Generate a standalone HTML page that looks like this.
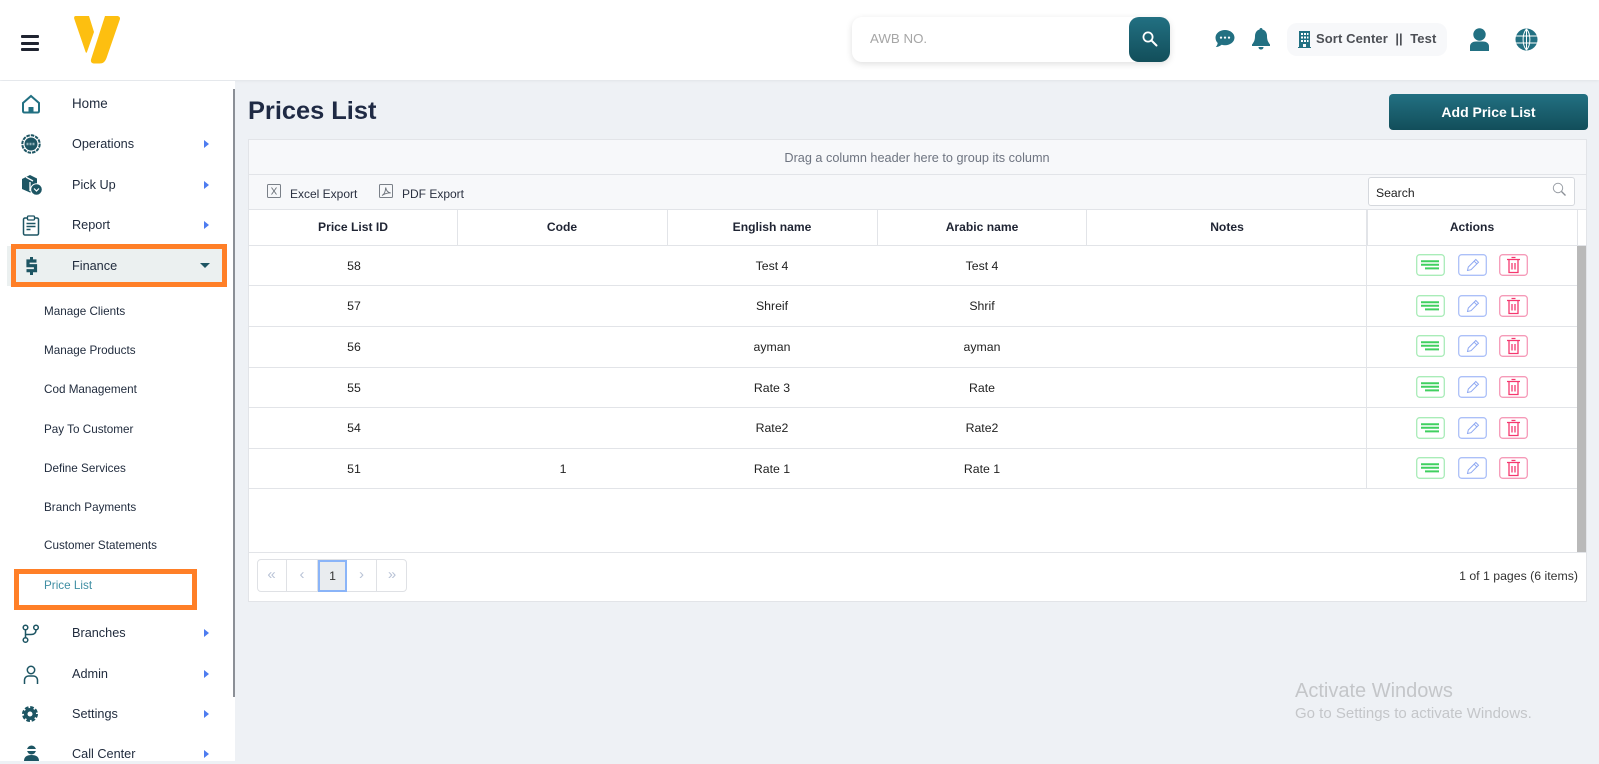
<!DOCTYPE html>
<html><head><meta charset="utf-8"><title>Prices List</title>
<style>
html,body{margin:0;padding:0;width:1599px;height:761px;overflow:hidden;background:#eef1f5;font-family:"Liberation Sans",sans-serif;color:#1f2a3c}
*{box-sizing:border-box}
.a,.t,.c{position:absolute}
.t,.c{height:20px;line-height:20px;white-space:nowrap}
.c{transform:translateX(-50%)}
.m{font-size:12.700px;left:72px;color:#1f2a3c}
.s{font-size:11.700px;left:44px;color:#1f2a3c}
.ar{position:absolute;left:204px;width:0;height:0;border-left:5px solid #4d7cf0;border-top:4.500px solid transparent;border-bottom:4.500px solid transparent}
.td{font-size:12.300px;color:#222}
.th{font-size:12.100px;font-weight:bold;color:#1f2433}
.hl{position:absolute;left:249px;width:1328px;height:1px;background:#e2e4e8}
.vl{position:absolute;width:1px;background:#e2e4e8}
.pc{position:absolute;top:559px;height:33px;border-right:1px solid #dfe1e5;text-align:center;line-height:31px;color:#b9c3d6;font-size:15px}
</style></head><body>
<svg width="0" height="0" style="position:absolute">
<symbol id="ag" viewBox="0 0 29 22"><rect x=".7" y=".7" width="27.600" height="20.600" rx="3" fill="#fff" stroke="#a9ecb8" stroke-width="1.300"/><path d="M5 7.200h18M5 10.800h18M9 14.400h14" stroke="#40d060" stroke-width="2"/></symbol>
<symbol id="ab" viewBox="0 0 29 22"><rect x=".7" y=".7" width="27.600" height="20.600" rx="3" fill="#fff" stroke="#acc0f8" stroke-width="1.300"/><path d="M9.500 16.500l.8-3.500 7.500-7.500 2.700 2.700-7.500 7.500zM16.200 7.200l2.700 2.700" fill="none" stroke="#8ea8f2" stroke-width="1"/></symbol>
<symbol id="ar" viewBox="0 0 29 22"><rect x=".7" y=".7" width="27.600" height="20.600" rx="3" fill="#fff" stroke="#f59ab8" stroke-width="1.300"/><path d="M8 5.500h13M12.500 3.500h4M10 5.500v13h9v-13M13 9v6.500M16 9v6.500" fill="none" stroke="#f5386f" stroke-width="1.300"/></symbol>
</svg>

<!-- header -->
<div class="a" style="left:0;top:0;width:1599px;height:80px;background:#fff;box-shadow:0 1px 3px rgba(0,0,0,.06)"></div>
<div class="a" style="left:21px;top:35px;width:18px;height:3px;background:#1f2430;border-radius:1px"></div>
<div class="a" style="left:21px;top:42px;width:18px;height:3px;background:#1f2430;border-radius:1px"></div>
<div class="a" style="left:21px;top:48px;width:18px;height:3px;background:#1f2430;border-radius:1px"></div>
<svg class="a" style="left:70px;top:12px" width="54" height="56" viewBox="70 12 54 56"><path d="M75.500 16H89l5 16-7 20c-.4 1-1 1-1.400 0L74.300 19c-.5-1.500 0-3 1.200-3z" fill="#fdbf10"/><path d="M105 16h12c2 0 3.200 1.200 3 3L106.500 58c-1.500 4-3.500 5.500-7 5.500H94c-2.500 0-3.500-2-3-4z" fill="#fdbf10"/></svg>

<div class="a" style="left:852px;top:17px;width:318px;height:45px;background:#fff;border-radius:10px;box-shadow:0 2px 7px rgba(0,0,0,.13)"></div>
<div class="t" style="left:870px;top:29px;font-size:13.300px;color:#a6a6a6">AWB NO.</div>
<div class="a" style="left:1129px;top:17px;width:41px;height:45px;border-radius:10px;background:linear-gradient(#227082,#124e5a)"></div>
<svg class="a" style="left:1141px;top:30px" width="18" height="18" viewBox="0 0 18 18"><circle cx="7" cy="7" r="4.600" fill="none" stroke="#fff" stroke-width="1.800"/><path d="M10.500 10.500l5 5" stroke="#fff" stroke-width="2" stroke-linecap="round"/></svg>

<svg class="a" style="left:1215px;top:29px" width="20" height="20" viewBox="0 0 20 20"><path d="M10 1c5.300 0 9.500 3.400 9.500 7.600s-4.200 7.600-9.500 7.600c-1.200 0-2.300-.2-3.300-.5C5 17 3 18 .8 18c1-1 1.700-2.500 1.900-4C1.300 12.600.5 10.700.5 8.600.5 4.400 4.700 1 10 1z" fill="#227082"/><circle cx="6" cy="8.600" r="1.100" fill="#fff"/><circle cx="10" cy="8.600" r="1.100" fill="#fff"/><circle cx="14" cy="8.600" r="1.100" fill="#fff"/></svg>
<svg class="a" style="left:1251px;top:28px" width="20" height="22" viewBox="0 0 20 22"><path d="M10 0c1 0 1.500.7 1.500 1.500C14.500 2.300 16 5 16 8c0 4 1 6 3 8.500V18H1v-1.500C3 14 4 12 4 8c0-3 1.500-5.700 4.500-6.500C8.500.7 9 0 10 0zM7.500 19h5c0 1.500-1 2.500-2.500 2.500S7.500 20.500 7.500 19z" fill="#227082"/></svg>

<div class="a" style="left:1287px;top:23px;width:160px;height:33px;background:#f7f8fa;border-radius:10px"></div>
<svg class="a" style="left:1298px;top:31px" width="13" height="17" viewBox="0 0 13 17"><path d="M1 0h11v16H8v-3H5v3H1z" fill="#227082"/><path d="M0 16h13v1H0z" fill="#227082"/><path d="M3 2h2v2H3zM6 2h2v2H6zM9 2h1.500v2H9zM3 5.500h2v2H3zM6 5.500h2v2H6zM9 5.500h1.500v2H9zM3 9h2v2H3zM6 9h2v2H6zM9 9h1.500v2H9z" fill="#fff"/></svg>
<div class="t" style="left:1316px;top:29px;font-size:13px;font-weight:bold;color:#4c4f55;letter-spacing:.1px">Sort Center&nbsp; ||&nbsp; Test</div>

<svg class="a" style="left:1469px;top:28px" width="21" height="23" viewBox="0 0 21 23"><circle cx="10.500" cy="6.500" r="6.200" fill="#227082"/><path d="M1 23v-4.500C1 15 4 13.500 7 13.500h7c3 0 6 1.500 6 5V23z" fill="#227082"/></svg>
<svg class="a" style="left:1515px;top:28px" width="23" height="23" viewBox="0 0 23 23"><circle cx="11.500" cy="11.500" r="11" fill="#227082"/><path d="M1 8h21M1 15h21M11.500 1v21M11.500 1C7 6 7 17 11.500 22M11.500 1c4.500 5 4.500 16 0 21" fill="none" stroke="#fff" stroke-width="1"/></svg>

<!-- sidebar -->
<div class="a" style="left:0;top:81px;width:235px;height:680px;background:#fff"></div>
<div class="a" style="left:233px;top:89px;width:2px;height:608px;background:#8b8f96"></div>

<svg class="a" style="left:21px;top:93px" width="20" height="22" viewBox="0 0 20 20"><path d="M10 2l8 7v8c0 1-.5 1.500-1.500 1.500h-13C2.500 18.500 2 18 2 17V9z" fill="none" stroke="#227082" stroke-width="2"/><path d="M7.500 18.500V13h5v5.500z" fill="#227082"/></svg>
<div class="t m" style="top:94px;font-size:13.400px">Home</div>
<svg class="a" style="left:21px;top:134px" width="20" height="20" viewBox="0 0 20 20"><circle cx="10" cy="10" r="8.700" fill="none" stroke="#1d5563" stroke-width="2" stroke-dasharray="3.500 1"/><circle cx="10" cy="10" r="6.500" fill="#1d5563"/><path d="M5.500 10h9" stroke="#8fb0b8" stroke-width="2.500" stroke-dasharray="2 1"/></svg>
<div class="t m" style="top:134px">Operations</div><div class="ar" style="top:140px"></div>
<svg class="a" style="left:21px;top:174px" width="22" height="22" viewBox="0 0 22 22"><path d="M1 5l8-4 7 3.500v5.500l-3 3-1 5-3 .5-8-3.500z" fill="#1d5563"/><path d="M5 3.200l7 3.800M9 8v9" stroke="#fff" stroke-width="1.300" fill="none"/><circle cx="15.500" cy="15.500" r="5.800" fill="#1d5563" stroke="#fff"/><path d="M13 14.500l2.500 2.500 2.500-2.500" stroke="#fff" stroke-width="1.200" fill="none"/></svg>
<div class="t m" style="top:175px">Pick Up</div><div class="ar" style="top:181px"></div>
<svg class="a" style="left:22px;top:215px" width="18" height="21" viewBox="0 0 18 21"><rect x="1.500" y="3" width="15" height="17" rx="1.500" fill="none" stroke="#1d5563" stroke-width="1.500"/><rect x="5.500" y="1" width="7" height="4" rx="1" fill="#fff" stroke="#1d5563" stroke-width="1.300"/><path d="M4.500 8.500h9M4.500 11.500h9M4.500 14.500h4" stroke="#1d5563" stroke-width="1.400"/></svg>
<div class="t m" style="top:215px">Report</div><div class="ar" style="top:221px"></div>

<div class="a" style="left:7px;top:246px;width:218px;height:40px;background:#ebf0f0"></div>
<div class="a" style="left:11px;top:244px;width:216px;height:43px;border:5px solid #ff7f27"></div>
<svg class="a" style="left:25px;top:256px" width="13" height="20" viewBox="0 0 13 20"><path d="M11.500 5H3v4.700h7.500v5H1.500" fill="none" stroke="#1d5563" stroke-width="3.200"/><path d="M6.500 1v3M6.500 16v3" stroke="#1d5563" stroke-width="3"/></svg>
<div class="t m" style="top:256px">Finance</div>
<div class="a" style="left:200px;top:263px;width:0;height:0;border-top:5px solid #1d5563;border-left:5px solid transparent;border-right:5px solid transparent"></div>

<div class="t s" style="top:302px">Manage Clients</div>
<div class="t s" style="top:341px">Manage Products</div>
<div class="t s" style="top:380px">Cod Management</div>
<div class="t s" style="top:420px">Pay To Customer</div>
<div class="t s" style="top:459px">Define Services</div>
<div class="t s" style="top:498px">Branch Payments</div>
<div class="t s" style="top:536px">Customer Statements</div>
<div class="t s" style="top:576px;color:#3f8ea3">Price List</div>
<div class="a" style="left:14px;top:569px;width:183px;height:41px;border:5px solid #ff7f27"></div>

<svg class="a" style="left:22px;top:624px" width="18" height="20" viewBox="0 0 18 20"><circle cx="3.500" cy="3.500" r="2.300" fill="none" stroke="#1d5563" stroke-width="1.500"/><circle cx="14" cy="3.500" r="2.300" fill="none" stroke="#1d5563" stroke-width="1.500"/><circle cx="3.500" cy="16" r="2.300" fill="none" stroke="#1d5563" stroke-width="1.500"/><path d="M3.500 6v7.500M14 6c0 3-2 4.500-5 4.500H3.500" fill="none" stroke="#1d5563" stroke-width="1.500"/></svg>
<div class="t m" style="top:623px">Branches</div><div class="ar" style="top:629px"></div>
<svg class="a" style="left:23px;top:665px" width="16" height="19" viewBox="0 0 16 19"><circle cx="8" cy="5" r="3.700" fill="none" stroke="#1d5563" stroke-width="1.500"/><path d="M1.500 19v-3.500c0-3 2-4.500 4-4.500h5c2 0 4 1.500 4 4.500V19" fill="none" stroke="#1d5563" stroke-width="1.500"/></svg>
<div class="t m" style="top:664px">Admin</div><div class="ar" style="top:670px"></div>
<svg class="a" style="left:22px;top:706px" width="16" height="16" viewBox="0 0 16 16"><circle cx="8" cy="8" r="6" fill="#1d5563"/><circle cx="8" cy="8" r="6.800" fill="none" stroke="#1d5563" stroke-width="2.400" stroke-dasharray="3.600 1.740"/><circle cx="8" cy="8" r="2.500" fill="#fff"/></svg>
<div class="t m" style="top:704px">Settings</div><div class="ar" style="top:710px"></div>
<svg class="a" style="left:23px;top:745px" width="17" height="16" viewBox="0 0 17 16"><circle cx="8.500" cy="5" r="4.500" fill="#1d5563"/><path d="M4 4h9v2H4z" fill="#fff"/><path d="M1 16c0-4 2.500-6 7.500-6s7.500 2 7.500 6z" fill="#1d5563"/></svg>
<div class="t m" style="top:744px">Call Center</div><div class="ar" style="top:750px"></div>

<!-- page -->
<div class="t" style="left:248px;top:96px;height:30px;line-height:30px;font-size:25.400px;font-weight:bold;color:#1f2a44">Prices List</div>
<div class="a" style="left:1389px;top:94px;width:199px;height:36px;border-radius:4px;background:linear-gradient(#227082,#124e5a);color:#fff;font-size:14px;font-weight:bold;text-align:center;line-height:36px">Add Price List</div>

<!-- grid -->
<div class="a" style="left:248px;top:139px;width:1339px;height:463px;background:#fff;border:1px solid #e2e4e8"></div>
<div class="a" style="left:249px;top:140px;width:1337px;height:69px;background:#f7f8fa"></div>
<div class="a" style="left:249px;top:174px;width:1337px;height:1px;background:#e2e4e8"></div>
<div class="a" style="left:249px;top:209px;width:1337px;height:1px;background:#e2e4e8"></div>
<div class="c" style="left:917px;top:148px;font-size:12.700px;color:#6e7480">Drag a column header here to group its column</div>

<svg class="a" style="left:267px;top:184px" width="15" height="15" viewBox="0 0 15 15"><rect x=".5" y=".5" width="13" height="13" rx="1" fill="none" stroke="#7a8088"/><path d="M4.500 3.500l5 7M9.500 3.500l-5 7" stroke="#6a7078" stroke-width=".9"/></svg>
<div class="t" style="left:290px;top:184px;font-size:12px;color:#2a3040">Excel Export</div>
<svg class="a" style="left:379px;top:184px" width="15" height="15" viewBox="0 0 15 15"><rect x=".5" y=".5" width="13" height="13" rx="1" fill="none" stroke="#7a8088"/><path d="M3 11.500c2-1 3.500-4 3.700-8 .5 3 2 5 5 5.500-3-.2-6 .7-8.700 2.500z" fill="none" stroke="#6a7078" stroke-width=".9"/></svg>
<div class="t" style="left:402px;top:184px;font-size:12px;color:#2a3040">PDF Export</div>

<div class="a" style="left:1368px;top:177px;width:207px;height:29px;background:#fff;border:1px solid #d5d8dd;border-radius:3px"></div>
<div class="t" style="left:1376px;top:183px;font-size:12.200px;color:#222">Search</div>
<svg class="a" style="left:1552px;top:182px" width="15" height="15" viewBox="0 0 15 15"><circle cx="6" cy="6" r="4.700" fill="none" stroke="#9a9fa6" stroke-width="1"/><path d="M9.500 9.500l4 4" stroke="#8a8f96" stroke-width="1.300"/></svg>

<div class="vl" style="left:457px;top:210px;height:35px"></div>
<div class="vl" style="left:667px;top:210px;height:35px"></div>
<div class="vl" style="left:877px;top:210px;height:35px"></div>
<div class="vl" style="left:1086px;top:210px;height:35px"></div>
<div class="vl" style="left:1366px;top:210px;height:278px"></div>
<div class="a" style="left:1366px;top:210px;width:2px;height:35px;background:#e2e4e8"></div>
<div class="vl" style="left:1577px;top:210px;height:35px"></div>
<div class="a" style="left:1577px;top:245px;width:9px;height:307px;background:#b9b9b9"></div>

<div class="hl" style="top:245px;width:1337px"></div>
<div class="hl" style="top:285px"></div><div class="hl" style="top:326px"></div><div class="hl" style="top:367px"></div><div class="hl" style="top:407px"></div><div class="hl" style="top:448px"></div><div class="hl" style="top:488px"></div>
<div class="hl" style="top:552px;width:1337px"></div>

<div class="c th" style="left:353px;top:217px">Price List ID</div>
<div class="c th" style="left:562px;top:217px">Code</div>
<div class="c th" style="left:772px;top:217px">English name</div>
<div class="c th" style="left:982px;top:217px">Arabic name</div>
<div class="c th" style="left:1227px;top:217px">Notes</div>
<div class="c th" style="left:1472px;top:217px">Actions</div>

<div class="c td" style="left:354px;top:256px">58</div><div class="c td" style="left:772px;top:256px">Test 4</div><div class="c td" style="left:982px;top:256px">Test 4</div>
<div class="c td" style="left:354px;top:296px">57</div><div class="c td" style="left:772px;top:296px">Shreif</div><div class="c td" style="left:982px;top:296px">Shrif</div>
<div class="c td" style="left:354px;top:337px">56</div><div class="c td" style="left:772px;top:337px">ayman</div><div class="c td" style="left:982px;top:337px">ayman</div>
<div class="c td" style="left:354px;top:378px">55</div><div class="c td" style="left:772px;top:378px">Rate 3</div><div class="c td" style="left:982px;top:378px">Rate</div>
<div class="c td" style="left:354px;top:418px">54</div><div class="c td" style="left:772px;top:418px">Rate2</div><div class="c td" style="left:982px;top:418px">Rate2</div>
<div class="c td" style="left:354px;top:459px">51</div><div class="c td" style="left:563px;top:459px">1</div><div class="c td" style="left:772px;top:459px">Rate 1</div><div class="c td" style="left:982px;top:459px">Rate 1</div>

<svg class="a" style="left:1416px;top:254px" width="29" height="22"><use href="#ag"/></svg><svg class="a" style="left:1458px;top:254px" width="29" height="22"><use href="#ab"/></svg><svg class="a" style="left:1499px;top:254px" width="29" height="22"><use href="#ar"/></svg>
<svg class="a" style="left:1416px;top:295px" width="29" height="22"><use href="#ag"/></svg><svg class="a" style="left:1458px;top:295px" width="29" height="22"><use href="#ab"/></svg><svg class="a" style="left:1499px;top:295px" width="29" height="22"><use href="#ar"/></svg>
<svg class="a" style="left:1416px;top:335px" width="29" height="22"><use href="#ag"/></svg><svg class="a" style="left:1458px;top:335px" width="29" height="22"><use href="#ab"/></svg><svg class="a" style="left:1499px;top:335px" width="29" height="22"><use href="#ar"/></svg>
<svg class="a" style="left:1416px;top:376px" width="29" height="22"><use href="#ag"/></svg><svg class="a" style="left:1458px;top:376px" width="29" height="22"><use href="#ab"/></svg><svg class="a" style="left:1499px;top:376px" width="29" height="22"><use href="#ar"/></svg>
<svg class="a" style="left:1416px;top:417px" width="29" height="22"><use href="#ag"/></svg><svg class="a" style="left:1458px;top:417px" width="29" height="22"><use href="#ab"/></svg><svg class="a" style="left:1499px;top:417px" width="29" height="22"><use href="#ar"/></svg>
<svg class="a" style="left:1416px;top:457px" width="29" height="22"><use href="#ag"/></svg><svg class="a" style="left:1458px;top:457px" width="29" height="22"><use href="#ab"/></svg><svg class="a" style="left:1499px;top:457px" width="29" height="22"><use href="#ar"/></svg>

<!-- pager -->
<div class="a" style="left:257px;top:559px;width:150px;height:33px;border:1px solid #dfe1e5;border-radius:4px"></div>
<div class="pc" style="left:257px;width:30px">«</div>
<div class="pc" style="left:287px;width:31px">‹</div>
<div class="a" style="left:318px;top:560px;width:29px;height:32px;background:#e9ecef;border:2px solid #8ab4f8;text-align:center;line-height:28px;font-size:12.300px;color:#333">1</div>
<div class="pc" style="left:347px;width:30px;border-right:1px solid #dfe1e5">›</div>
<div class="pc" style="left:377px;width:30px;border-right:0">»</div>
<div class="t" style="right:21px;top:566px;font-size:12.300px;color:#333">1 of 1 pages (6 items)</div>

<div class="t" style="left:1295px;top:679px;height:24px;line-height:24px;font-size:20px;color:#c4c6c9">Activate Windows</div>
<div class="t" style="left:1295px;top:704px;font-size:15px;color:#c4c6c9">Go to Settings to activate Windows.</div>
</body></html>
